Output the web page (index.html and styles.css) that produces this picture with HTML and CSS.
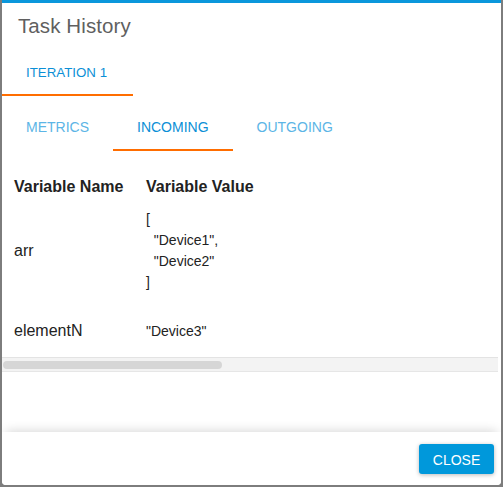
FILE: index.html
```html
<!DOCTYPE html>
<html>
<head>
<meta charset="utf-8">
<link rel="stylesheet" href="styles.css">
</head>
<body>
<div class="dialog">
  <header class="dialog-title">Task History</header>
  <nav class="tabs tabs-main">
    <div class="tab tab-main tab-active">ITERATION 1</div>
  </nav>
  <nav class="tabs tabs-sub">
    <div class="tab tab-sub">METRICS</div>
    <div class="tab tab-sub tab-active">INCOMING</div>
    <div class="tab tab-sub">OUTGOING</div>
  </nav>
  <div class="content">
    <table class="vars">
      <thead>
        <tr><th class="col-name">Variable Name</th><th>Variable Value</th></tr>
      </thead>
      <tbody>
        <tr class="row-block">
          <td class="name">arr</td>
          <td class="value"><pre class="json">[
  "Device1",
  "Device2"
]</pre></td>
        </tr>
        <tr class="row-single">
          <td class="name">elementN</td>
          <td class="value"><pre class="json">"Device3"</pre></td>
        </tr>
      </tbody>
    </table>
    <div class="hscroll"><div class="hscroll-thumb"></div></div>
  </div>
  <footer class="dialog-actions">
    <button class="btn">CLOSE</button>
  </footer>
</div>
</body>
</html>
```
FILE: styles.css
```css
html, body {
  margin: 0;
  padding: 0;
}
body {
  background: #7d7d7d;
  width: 503px;
  height: 487px;
  overflow: hidden;
  font-family: "Liberation Sans", Arial, sans-serif;
}
.dialog {
  margin-left: 2px;
  width: 499px;
  height: 482px;
  border-top: 3px solid #0a97dc;
  background: #fff;
  border-radius: 0 0 4px 4px;
  display: flex;
  flex-direction: column;
  overflow: hidden;
}
.dialog-title {
  height: 45px;
  box-sizing: border-box;
  padding: 11px 16px 0;
  font-size: 20.5px;
  line-height: 24px;
  color: #5f5f5f;
  letter-spacing: 0.1px;
}
.tabs {
  display: flex;
  height: 48px;
}
.tabs-sub {
  margin-top: 7px;
}
.tab {
  display: flex;
  align-items: center;
  box-sizing: border-box;
  height: 48px;
  border-bottom: 2px solid transparent;
  padding-top: 2px;
  color: #5cb5e6;
  white-space: nowrap;
}
.tab-main {
  font-size: 13.3px;
  padding-left: 24px;
  padding-right: 26px;
}
.tab-sub {
  font-size: 14px;
  padding-left: 24px;
  padding-right: 24px;
}
.tab-active {
  color: #0b8fd6;
  border-bottom-color: #ff6d00;
}
.content {
  flex: 1;
  display: flex;
  flex-direction: column;
}
.vars {
  border-collapse: collapse;
  margin-left: 12px;
  color: #222;
}
.vars th {
  text-align: left;
  font-weight: bold;
  font-size: 16px;
  line-height: 20px;
  padding: 26px 0 8px;
}
.col-name {
  width: 132px;
}
.vars td {
  padding: 0;
}
.name {
  font-size: 16px;
  line-height: 20px;
}
.json {
  margin: 0;
  font-family: "Liberation Sans", Arial, sans-serif;
  font-size: 14px;
  line-height: 21px;
  white-space: pre;
  color: #222;
}
.row-block td {
  vertical-align: middle;
  padding: 4px 0 8px;
}
.row-single td {
  vertical-align: baseline;
  padding: 20px 0 16px;
}
.row-single .json {
  line-height: 20px;
}
.hscroll {
  margin-right: 3px;
  height: 10px;
  background: #f3f3f3;
  border-top: 1px solid #e3e3e3;
  border-bottom: 1px solid #e6e6e6;
  padding: 3px 0 0 1px;
  box-sizing: content-box;
}
.hscroll-thumb {
  width: 219px;
  height: 8px;
  border-radius: 4px;
  background: #d6d6d6;
}
.dialog-actions {
  height: 53px;
  flex: none;
  display: flex;
  justify-content: flex-end;
  align-items: flex-start;
  padding: 12px 7px 0 0;
  box-sizing: border-box;
  box-shadow: 0 -5px 10px -4px rgba(0, 0, 0, 0.16);
  background: #fff;
}
.btn {
  width: 75px;
  height: 30px;
  border: none;
  border-radius: 3px;
  background: #0098db;
  color: #fff;
  font-family: "Liberation Sans", Arial, sans-serif;
  font-size: 14px;
  padding: 1px 0 0;
  box-shadow: 0 1px 4px rgba(0, 0, 0, 0.28);
}
```
